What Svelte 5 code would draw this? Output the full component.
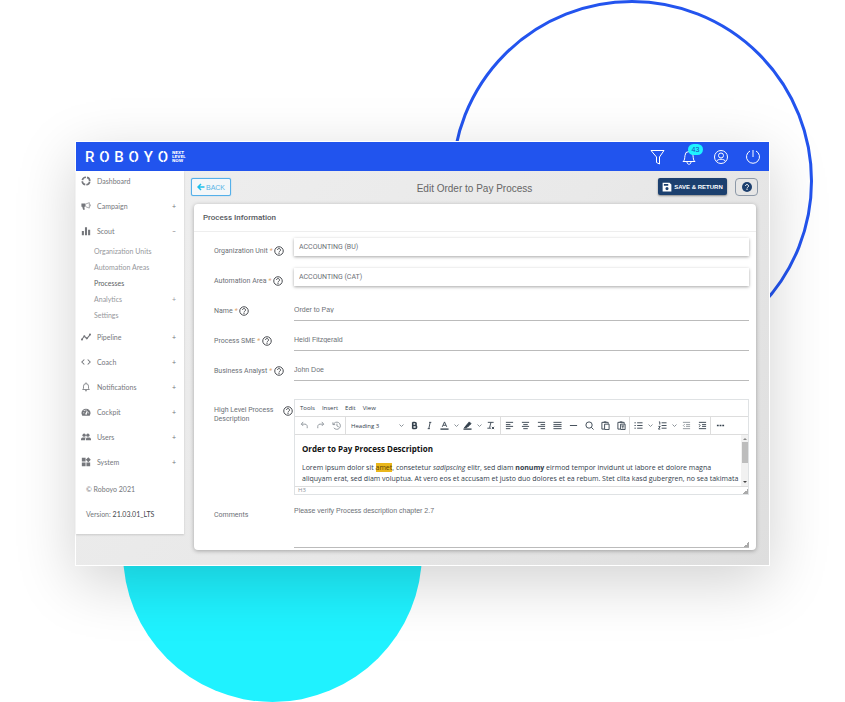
<script lang="ts">
    type NavItem = { label: string; icon: string; mark?: string; children?: NavChild[] };
    type NavChild = { label: string; mark?: string; active?: boolean };

    const nav: NavItem[] = [
        { label: "Dashboard", icon: "ring" },
        { label: "Campaign", icon: "horn", mark: "+" },
        {
            label: "Scout",
            icon: "bars",
            mark: "–",
            children: [
                { label: "Organization Units" },
                { label: "Automation Areas" },
                { label: "Processes", active: true },
                { label: "Analytics", mark: "+" },
                { label: "Settings" },
            ],
        },
        { label: "Pipeline", icon: "line", mark: "+" },
        { label: "Coach", icon: "code", mark: "+" },
        { label: "Notifications", icon: "bell", mark: "+" },
        { label: "Cockpit", icon: "gauge", mark: "+" },
        { label: "Users", icon: "users", mark: "+" },
        { label: "System", icon: "grid", mark: "+" },
    ];

    const menus = ["Tools", "Insert", "Edit", "View"];

    let unit = $state("ACCOUNTING (BU)");
    let area = $state("ACCOUNTING (CAT)");
    let blockFormat = $state("Heading 3");
    let comments = $state("Please verify Process description chapter 2.7");
    let fields = $state([
        { id: "name", label: "Name", value: "Order to Pay" },
        { id: "sme", label: "Process SME", value: "Heidi Fitzgerald" },
        { id: "analyst", label: "Business Analyst", value: "John Doe" },
    ]);
</script>

{#snippet navIcon(name: string)}
    <svg class="nav-icon" viewBox="0 0 24 24" fill="currentColor" aria-hidden="true">
        {#if name === "ring"}
            <circle cx="12" cy="12" r="9" fill="none" stroke="currentColor" stroke-width="4" stroke-dasharray="11.5 2.6" stroke-dashoffset="-1.5" />
        {:else if name === "horn"}
            <path d="M1 6h10v8H8l1 7H5l-2-7H1z" />
            <path d="M12 7l8-3v13l-8-3M22 8c1 1 1 4 0 5" fill="none" stroke="currentColor" stroke-width="1.500" />
        {:else if name === "bars"}
            <path d="M2 12h5v10H2zM9.500 3h5v19h-5zM17 9h5v13h-5z" />
        {:else if name === "line"}
            <path d="M1 19l7-9 6 6 9-11" fill="none" stroke="currentColor" stroke-width="2.500" />
            <circle cx="2.500" cy="18" r="2.500" /><circle cx="8" cy="10" r="2.500" /><circle cx="14" cy="15" r="2.500" /><circle cx="21.500" cy="6" r="2.500" />
        {:else if name === "code"}
            <path d="M8 6l-6 6 6 6M16 6l6 6-6 6" fill="none" stroke="currentColor" stroke-width="2.500" />
        {:else if name === "bell"}
            <path d="M4 18h16l-2-3v-5a6 6 0 0 0-12 0v5zM12 4V1" fill="none" stroke="currentColor" stroke-width="2" />
            <path d="M9.500 20h5a2.500 2.500 0 0 1-5 0z" />
        {:else if name === "gauge"}
            <path fill-rule="evenodd" d="M1 15a11 11 0 0 1 22 0l-2 6H3zM11 6v3h2V6zM5 13v2h3v-2zM16 13v2h3v-2zM6 8l2 2 1.500-1.500-2-2zM14 9l-3 6a2 2 0 1 0 3 1l2-6z" />
        {:else if name === "users"}
            <circle cx="7.500" cy="7.500" r="4" /><circle cx="16.500" cy="7.500" r="4" />
            <path d="M0 20v-3c0-3 3-4 7.500-4 2 0 3 .3 4 .8-1 .9-1.500 2-1.500 3.200v3zM12 20v-3c0-3 2-4 5-4 4 0 7 1 7 4v3z" />
        {:else}
            <path d="M2 2h9v9H2zM2 13h9v9H2zM13 13h9v9h-9zM17.500 0.500l6 6-6 6-6-6z" />
        {/if}
    </svg>
{/snippet}

{#snippet help(topic: string)}
    <button class="help" type="button" aria-label="Help: {topic}">
        <svg viewBox="0 0 20 20" fill="none" stroke="currentColor" stroke-width="2" aria-hidden="true">
            <circle cx="10" cy="10" r="8.500" />
            <path d="M7 8a3 3 0 1 1 4.500 2.600Q10 11.500 10 13M10 14v2" />
        </svg>
    </button>
{/snippet}

{#snippet tool(name: string)}
    <button class="tool" class:muted={["undo", "redo", "restore", "outdent"].includes(name)} type="button" aria-label={name}>
        <svg viewBox="0 0 20 20" fill="none" stroke="currentColor" stroke-width="2" aria-hidden="true">
            {#if name === "undo"}
                <path d="M7 2L3 7l4 4M3 7h8q6 0 5 9" />
            {:else if name === "redo"}
                <path d="M13 2l4 5-4 4M17 7H9q-6 0-5 9" />
            {:else if name === "restore"}
                <path d="M2 3v5h5M3 8a8 8 0 1 1 1 7M11 6v5l4 2" />
            {:else if name === "bold"}
                <path d="M6 3v14M6 3.500h4.500a3 3 0 0 1 0 6.500H6M6 10h5.500a3 3 0 0 1 0 6.500H6" stroke-width="3.500" />
            {:else if name === "italic"}
                <path d="M9 3h5M6 17h5M11.500 3l-3 14" />
            {:else if name === "color"}
                <path d="M5 13l5-11 5 11M7 9.500h6" /><path d="M1 18h18" stroke-width="3" />
            {:else if name === "highlight"}
                <path d="M8 9l6-7 4 4-7 6zM8 9l-5 6h5l3-3z" fill="currentColor" /><path d="M1 18h18" stroke-width="3" />
            {:else if name === "clear"}
                <path d="M4 3h13M11 3L8 15M3 16h8M13 13l5 5M18 13l-5 5" />
            {:else if name === "left"}
                <path d="M2 3h16M2 8h10M2 12h16M2 17h10" />
            {:else if name === "center"}
                <path d="M2 3h16M5 8h10M2 12h16M5 17h10" />
            {:else if name === "right"}
                <path d="M2 3h16M8 8h10M2 12h16M8 17h10" />
            {:else if name === "justify"}
                <path d="M1 3h18M1 8h18M1 12h18M1 17h18" />
            {:else if name === "rule"}
                <path d="M2 10h16" />
            {:else if name === "search"}
                <circle cx="9" cy="9" r="7" /><path d="M14 14l5 5" />
            {:else if name === "paste"}
                <path d="M7 18H2V3h14v3M6 2h6M8 7h10v12H8z" />
            {:else if name === "paste text"}
                <path d="M7 18H2V3h14v3M6 2h6M8 7h10v12H8zM10 11h6M13 11v6" />
            {:else if name === "bullets"}
                <path d="M7 4h12M7 10h12M7 16h12M1 4h3M1 10h3M1 16h3" />
            {:else if name === "numbers"}
                <path d="M8 4h11M8 10h11M8 16h11M2 2h2v6M1 12h4l-4 6h4" />
            {:else if name === "outdent"}
                <path d="M2 3h16M9 8h9M9 12h9M2 17h16M6 7l-3 3 3 3" />
            {:else if name === "indent"}
                <path d="M2 3h16M9 8h9M9 12h9M2 17h16M2 7l3 3-3 3" />
            {:else}
                <path d="M2 10h4M8 10h4M14 10h4" stroke-width="3.500" />
            {/if}
        </svg>
    </button>
{/snippet}

{#snippet chevron(name: string)}
    <button class="chevron" type="button" aria-label="{name} options">
        <svg viewBox="0 0 10 10" fill="none" stroke="currentColor" stroke-width="2" aria-hidden="true"><path d="M1 3l4 4 4-4" /></svg>
    </button>
{/snippet}

<div class="stage">
    <div class="outline"></div>
    <div class="disc"></div>

    <div class="window">
        <header>
            <a class="logo" href="/" aria-label="Roboyo">
                <span class="word">
                    {#each "ROBOYO" as letter}
                        <span class:cut={letter === "O"}>{letter}</span>
                    {/each}
                </span>
                <span class="tagline">NEXT<br />LEVEL<br />NOW</span>
            </a>
            <div class="actions">
                <button type="button" aria-label="Filter">
                    <svg viewBox="0 0 16 16"><path d="M2 1.500h13L10.500 8v7l-3-1.500V8z" /></svg>
                </button>
                <button type="button" aria-label="Notifications, 43 new">
                    <svg viewBox="0 0 16 16"><path d="M2 12.500h12c-2-1.500-1.500-3-2-6a4 4 0 0 0-8 0c-.5 3 0 4.500-2 6zM6 13c0 3 4 3 4 0" /></svg>
                    <span class="badge">43</span>
                </button>
                <button type="button" aria-label="Account">
                    <svg viewBox="0 0 16 16"><circle cx="8" cy="8" r="6.500" /><circle cx="8" cy="6.500" r="2.500" /><path d="M3.500 12.500c1-3 8-3 9 0" /></svg>
                </button>
                <button type="button" aria-label="Sign out">
                    <svg viewBox="0 0 16 16"><path d="M8 1v7M5 2a6.500 6.500 0 1 0 6 0" /></svg>
                </button>
            </div>
        </header>

        <div class="body">
            <nav>
                {#each nav as item}
                    <a class="nav-row" href="#{item.icon}">
                        {@render navIcon(item.icon)}
                        <span>{item.label}</span>
                        {#if item.mark}<span class="mark">{item.mark}</span>{/if}
                    </a>
                    {#if item.children}
                        <div class="children">
                            {#each item.children as child}
                                <a class="child" class:active={child.active} href="#{item.icon}">
                                    <span>{child.label}</span>
                                    {#if child.mark}<span class="mark">{child.mark}</span>{/if}
                                </a>
                            {/each}
                        </div>
                    {/if}
                {/each}
                <div class="about">© Roboyo 2021</div>
                <div class="about">Version: <b>21.03.01_LTS</b></div>
            </nav>

            <main>
                <div class="topbar">
                    <button class="back" type="button">
                        <svg viewBox="0 0 16 16" aria-hidden="true"><path d="M15 8H3M8 2L2 8l6 6" /></svg>BACK
                    </button>
                    <h1>Edit Order to Pay Process</h1>
                    <div class="topbar-end">
                        <button class="save" type="button">
                            <svg viewBox="0 0 16 16" aria-hidden="true"><path fill="#fff" fill-rule="evenodd" d="M1 1h11l3 3v11H1zM3 3v3h7V3zM8 8a2.500 2.500 0 1 0 0 5 2.500 2.500 0 0 0 0-5z" /></svg>SAVE &amp; RETURN
                        </button>
                        <button class="info" type="button" aria-label="Help">
                            <svg viewBox="0 0 20 20" aria-hidden="true"><circle cx="10" cy="10" r="10" fill="#1c3f6e" /><path d="M7 8a3 3 0 1 1 4.500 2.600Q10 11.500 10 13M10 14v2" fill="none" stroke="#fff" stroke-width="2" /></svg>
                        </button>
                    </div>
                </div>

                <form class="card">
                    <h2>Process Information</h2>
                    <div class="fields">
                        <div class="row">
                            <div class="label"><label for="unit">Organization Unit <i>*</i></label>{@render help("Organization Unit")}</div>
                            <select id="unit" class="picker" bind:value={unit}><option>ACCOUNTING (BU)</option></select>
                        </div>
                        <div class="row">
                            <div class="label"><label for="area">Automation Area <i>*</i></label>{@render help("Automation Area")}</div>
                            <select id="area" class="picker" bind:value={area}><option>ACCOUNTING (CAT)</option></select>
                        </div>
                        {#each fields as field}
                            <div class="row">
                                <div class="label"><label for={field.id}>{field.label} <i>*</i></label>{@render help(field.label)}</div>
                                <input id={field.id} type="text" bind:value={field.value} />
                            </div>
                        {/each}

                        <div class="row tall">
                            <div class="label spread"><span id="description">High Level Process Description</span>{@render help("Description")}</div>
                            <div class="editor">
                                <div class="menubar">
                                    {#each menus as menu}<button type="button">{menu}</button>{/each}
                                </div>
                                <div class="toolbar">
                                    <div class="group first">
                                        {@render tool("undo")}{@render tool("redo")}{@render tool("restore")}
                                    </div>
                                    <div class="group styles">
                                        <span class="format">
                                            <select aria-label="Block format" bind:value={blockFormat}><option>Heading 3</option></select>
                                            <svg viewBox="0 0 10 10" fill="none" stroke="currentColor" stroke-width="2" aria-hidden="true"><path d="M1 3l4 4 4-4" /></svg>
                                        </span>
                                        {@render tool("bold")}{@render tool("italic")}
                                        {@render tool("color")}{@render chevron("color")}
                                        {@render tool("highlight")}{@render chevron("highlight")}
                                        {@render tool("clear")}
                                    </div>
                                    <div class="group">
                                        {#each ["left", "center", "right", "justify", "rule", "search", "paste", "paste text"] as name}
                                            {@render tool(name)}
                                        {/each}
                                    </div>
                                    <div class="group">
                                        {@render tool("bullets")}{@render chevron("bullets")}
                                        {@render tool("numbers")}{@render chevron("numbers")}
                                        {@render tool("outdent")}{@render tool("indent")}
                                    </div>
                                    <div class="group last">{@render tool("more")}</div>
                                </div>
                                <div class="content">
                                    <div class="prose" contenteditable="true" role="textbox" tabindex="0" aria-labelledby="description">
                                        <h3>Order to Pay Process Description</h3>
                                        <p>
                                            Lorem ipsum dolor sit <mark>amet</mark>, consetetur <em>sadipscing</em> elitr, sed diam <b>nonumy</b> eirmod tempor invidunt ut labore et dolore magna aliquyam erat, sed diam voluptua. At vero eos et accusam et justo duo dolores et ea rebum. Stet clita kasd gubergren, no sea takimata
                                        </p>
                                    </div>
                                    <div class="scrollbar"><span class="up"></span><span class="thumb"></span><span class="down"></span></div>
                                </div>
                                <div class="status"><span>H3</span><span class="grip"></span></div>
                            </div>
                        </div>

                        <div class="row comments">
                            <div class="label"><label for="comments">Comments</label></div>
                            <div class="area">
                                <textarea id="comments" bind:value={comments}></textarea>
                                <span class="grip"></span>
                            </div>
                        </div>
                    </div>
                </form>
            </main>
        </div>
    </div>
</div>

<style>
    :global(body) {
        background: #fff;
    }

    * {
        box-sizing: border-box;
    }

    button, input, select, textarea {
        font: inherit;
        color: inherit;
        margin: 0;
        padding: 0;
        border: 0;
        border-radius: 0;
        background: none;
        outline: 0;
    }

    a {
        color: inherit;
        text-decoration: none;
    }

    h1, h2, h3, p {
        margin: 0;
    }

    svg {
        display: block;
        flex: none;
    }

    .stage {
        position: relative;
        min-height: 702px;
        padding: 141px 75px 134px;
        overflow: hidden;
        font-family: "Liberation Sans", Arial, sans-serif;
        font-size: 7px;
        color: #6c7076;
    }

    .outline {
        position: absolute;
        top: 0;
        right: 32px;
        width: 362px;
        height: 362px;
        border: 3px solid #2354ee;
        border-radius: 50%;
    }
    .disc {
        position: absolute;
        bottom: 0;
        left: 123px;
        width: 299px;
        height: 299px;
        border-radius: 50%;
        background: #1ff2ff;
    }

    .window {
        position: relative;
        border: 1px solid #fff;
        background: linear-gradient(135deg, #efefef, #e9e9e9 50%, #dedede);
        box-shadow: 0 16px 56px rgba(0, 0, 0, 0.18);
    }

    header {
        display: flex;
        justify-content: space-between;
        align-items: center;
        height: 29px;
        padding: 0 8px 0 9px;
        background: #2154ee;
        color: #fff;
    }
    .logo {
        display: flex;
        align-items: center;
        gap: 4px;
    }
    .word {
        display: flex;
        justify-content: space-between;
        width: 83px;
        font-family: Roboto, sans-serif;
        font-size: 15px;
        line-height: 16px;
        font-weight: 500;
    }
    .word span {
        position: relative;
    }
    .cut::after {
        content: "";
        position: absolute;
        top: 0;
        left: 50%;
        width: 1px;
        height: 100%;
        background: #2154ee;
        opacity: 0.5;
    }
    .tagline {
        font-family: "DejaVu Sans", sans-serif;
        font-size: 4px;
        line-height: 4px;
        font-weight: 700;
    }
    .actions {
        display: flex;
        gap: 16px;
    }
    .actions button {
        position: relative;
    }
    .actions svg {
        width: 16px;
        height: 16px;
        fill: none;
        stroke: #fff;
    }
    .badge {
        position: absolute;
        top: -5px;
        left: 7px;
        width: 15px;
        border-radius: 6px;
        background: #1ff2ff;
        color: #1c4ab8;
        font-size: 7px;
        line-height: 11px;
        text-align: center;
    }

    .body {
        display: flex;
        align-items: flex-start;
    }

    nav {
        flex: none;
        width: 108px;
        padding-bottom: 10px;
        background: #fff;
        box-shadow: 0 1px 2px rgba(0, 0, 0, 0.15);
        font-family: Lato, sans-serif;
        color: #75777c;
    }
    .nav-row {
        display: flex;
        align-items: center;
        gap: 6px;
        height: 25px;
        padding: 0 8px 0 5px;
    }
    .nav-row:first-child {
        height: 20px;
        margin-bottom: 2px;
    }
    .nav-icon {
        width: 10px;
        height: 10px;
    }
    .mark {
        margin-left: auto;
    }
    .children {
        padding-bottom: 1px;
    }
    .child {
        display: flex;
        align-items: center;
        height: 16px;
        padding: 0 8px 0 18px;
        color: #96989c;
    }
    .active {
        color: #5c5f64;
    }
    .about {
        height: 25px;
        padding-left: 10px;
        line-height: 31px;
    }
    .about b {
        font-weight: 400;
        color: #44474c;
    }

    main {
        flex: 1;
        min-width: 0;
        padding: 7px 11px 15px 7px;
    }
    .topbar {
        display: grid;
        grid-template-columns: 1fr auto 1fr;
        align-items: start;
        height: 26px;
    }
    .topbar button {
        display: flex;
        align-items: center;
        justify-content: center;
        height: 18px;
        border-radius: 2px;
    }
    h1 {
        font-size: 10px;
        line-height: 22px;
        font-weight: 400;
        color: #666;
    }
    .back {
        width: 40px;
        gap: 1px;
        border: 1px solid #54b0ea;
        background: #f4f7f9;
        color: #58b4e6;
        box-shadow: 0 0 1px #54b0ea;
    }
    .back svg {
        width: 8px;
        height: 8px;
        fill: none;
        stroke: #1cc0ec;
        stroke-width: 3;
    }
    .topbar-end {
        display: flex;
        justify-content: flex-end;
        gap: 8px;
    }
    .topbar .save {
        width: 69px;
        height: 17px;
        gap: 2px;
        background: #1c406f;
        color: #fff;
        font-size: 6px;
        font-weight: 700;
        box-shadow: 0 1px 2px rgba(0, 0, 0, 0.4);
    }
    .save svg {
        width: 10px;
        height: 10px;
    }
    .topbar .info {
        width: 23px;
        border: 1px solid #8d99a8;
        border-radius: 4px;
    }
    .info svg {
        width: 10px;
        height: 10px;
    }

    .card {
        margin: 0 2px 0 3px;
        border-radius: 4px;
        background: #fff;
        box-shadow: 0 1px 4px rgba(0, 0, 0, 0.3);
    }
    h2 {
        height: 28px;
        padding-left: 9px;
        border-bottom: 1px solid #eee;
        font-family: Roboto, sans-serif;
        font-size: 8px;
        line-height: 27px;
        font-weight: 500;
        color: #55585d;
    }
    .fields {
        padding: 4px 7px 2px 20px;
    }
    .row {
        display: grid;
        grid-template-columns: 80px minmax(0, 1fr);
        align-items: start;
        height: 30px;
    }
    .label {
        display: flex;
        align-items: center;
        gap: 2px;
        height: 30px;
        font-family: Roboto, sans-serif;
    }
    .label i {
        color: #e0a66e;
    }
    .help {
        color: #4a4d52;
    }
    .help svg {
        width: 10px;
        height: 10px;
    }
    .picker {
        appearance: none;
        width: 100%;
        height: 18px;
        margin-top: 2px;
        padding: 0 5px;
        background: #fff;
        font-family: Roboto, sans-serif;
        box-shadow: 0 1px 3px rgba(0, 0, 0, 0.35);
    }
    input {
        width: 100%;
        height: 21px;
        margin-top: 4px;
        padding-bottom: 2px;
        border-bottom: 1px solid #bbb;
    }

    .row.tall {
        height: auto;
        margin-top: 13px;
    }
    .label.spread {
        align-items: flex-start;
        justify-content: space-between;
        height: auto;
        padding: 7px 1px 0 0;
        line-height: 9px;
    }
    .editor {
        border: 1px solid #dfe2e4;
        font-family: "Open Sans", sans-serif;
        color: #33404c;
    }
    .menubar {
        display: flex;
        gap: 7px;
        height: 17px;
        padding-left: 5px;
        font-size: 6px;
        border-bottom: 1px solid #ddd;
    }
    .toolbar {
        display: flex;
        height: 18px;
        border-bottom: 1px solid #ddd;
    }
    .group {
        display: flex;
        align-items: center;
        border-right: 1px solid #ddd;
    }
    .first {
        padding: 0 1px;
    }
    .styles {
        padding-right: 2px;
    }
    .last {
        padding-left: 1px;
        border-right: 0;
    }
    .tool {
        display: flex;
        justify-content: center;
        width: 16px;
    }
    .styles .tool {
        width: 15px;
    }
    .tool svg {
        width: 9px;
        height: 9px;
    }
    .muted {
        color: #8b9299;
    }
    .chevron {
        width: 8px;
        color: #8b9299;
    }
    .chevron svg, .format svg {
        width: 5px;
        height: 5px;
        margin: 0 auto;
    }
    .format {
        display: flex;
        align-items: center;
        width: 61px;
        padding: 0 3px 0 5px;
        font-size: 6px;
    }
    .format svg {
        color: #8b9299;
    }
    .format select {
        appearance: none;
        flex: 1;
    }
    .content {
        display: flex;
        height: 51px;
        overflow: hidden;
    }
    .prose {
        flex: 1;
        min-width: 0;
        padding: 8px 0 0 7px;
        font-size: 7px;
        line-height: 11px;
        outline: 0;
    }
    h3 {
        margin-bottom: 8px;
        font-size: 8px;
        line-height: 11px;
        font-weight: 700;
        color: #111;
    }
    mark {
        background: #eab71b;
        color: #5a4205;
    }
    .scrollbar {
        display: flex;
        flex-direction: column;
        align-items: center;
        width: 7px;
        padding: 3px 0;
        background: #f1f1f1;
    }
    .thumb {
        width: 6px;
        height: 21px;
        margin-top: 2px;
        background: #bdbdbd;
    }
    .up, .down {
        border: 2px solid transparent;
    }
    .up {
        border-top-width: 0;
        border-bottom-color: #888;
    }
    .down {
        margin-top: auto;
        border-bottom-width: 0;
        border-top-color: #444;
    }
    .status {
        display: flex;
        justify-content: space-between;
        align-items: flex-end;
        height: 8px;
        padding-left: 3px;
        border-top: 1px solid #ddd;
        font-size: 6px;
        line-height: 8px;
        color: #8b9299;
    }
    .grip {
        width: 5px;
        height: 5px;
        background: linear-gradient(135deg, transparent 50%, #aaa 50%);
    }

    .row.comments {
        height: auto;
        margin-top: 5px;
    }
    .area {
        position: relative;
    }
    .area .grip {
        position: absolute;
        right: 0;
        bottom: 1px;
    }
    textarea {
        display: block;
        width: 100%;
        height: 48px;
        padding-top: 6px;
        border-bottom: 1px solid #bbb;
        line-height: 10px;
        resize: none;
    }
</style>
